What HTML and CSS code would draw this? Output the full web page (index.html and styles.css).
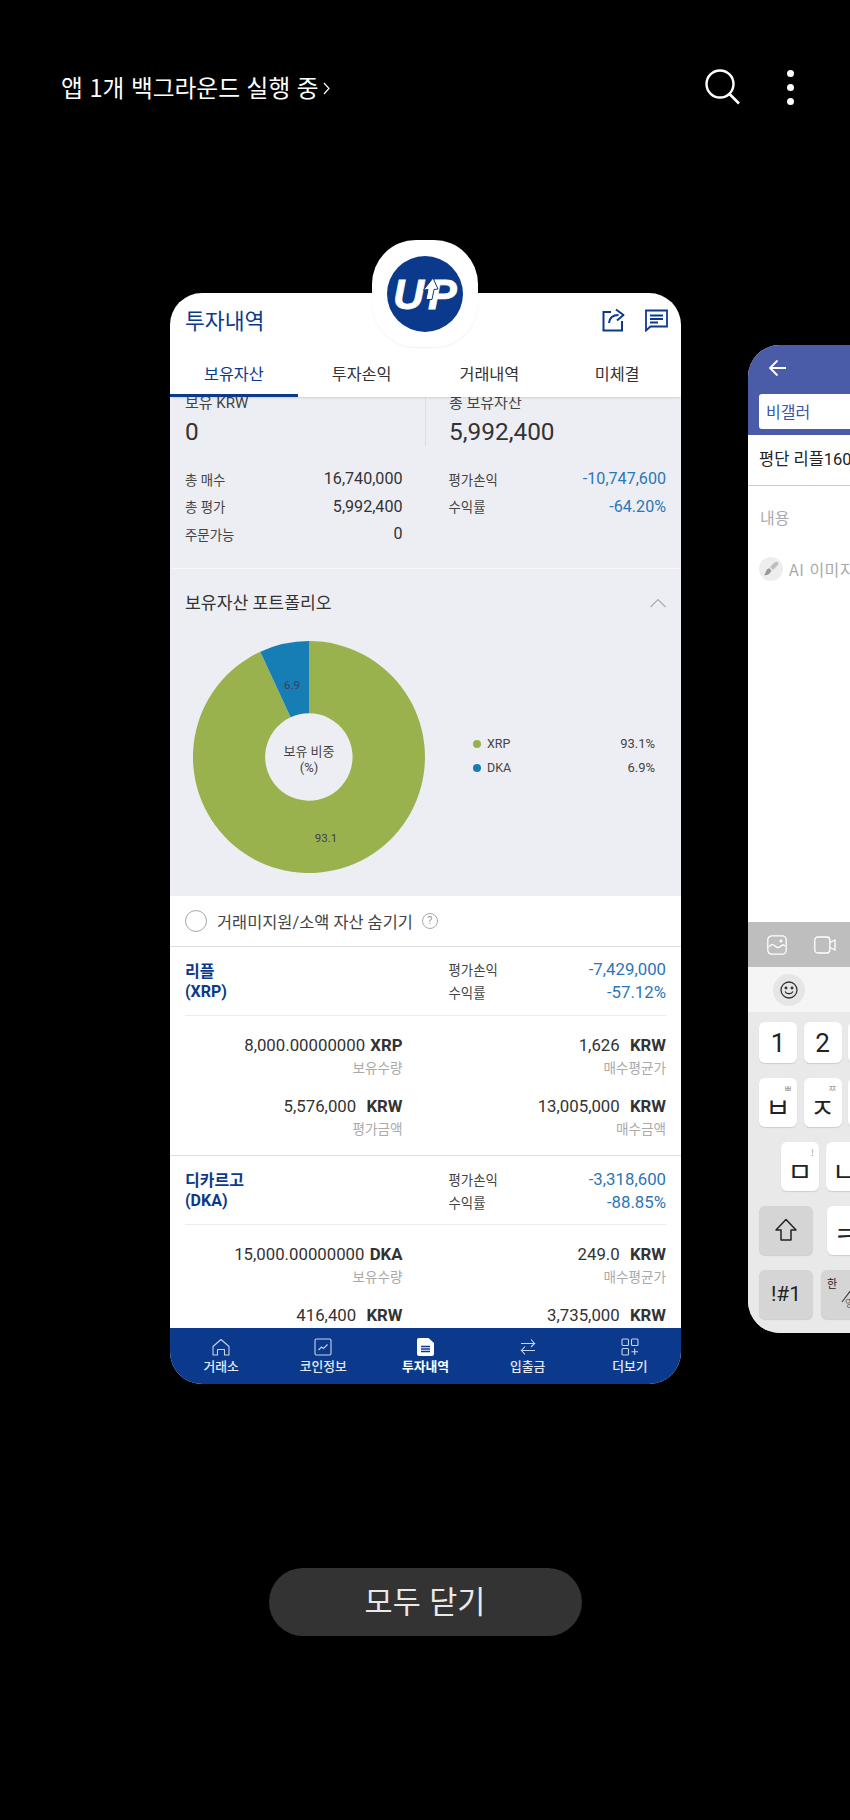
FILE: index.html
```html
<!DOCTYPE html>
<html lang="ko">
<head>
    <meta charset="UTF-8">
    <meta name="viewport" content="width=device-width, initial-scale=1.0">
    <title>최근 앱</title>
    <link rel="stylesheet" href="styles.css">
</head>
<body>
<div class="screen">

    <div class="topbar">
        <div class="running">앱 1개 백그라운드 실행 중
            <svg class="running-arrow" width="7" height="13" viewBox="0 0 7 13"><path d="M1 1l5 5.500-5 5.500" fill="none" stroke="#fff" stroke-width="1.200"/></svg>
        </div>
        <div class="top-actions">
            <svg width="38" height="40" viewBox="0 0 38 40"><circle cx="17" cy="17" r="13.500" fill="none" stroke="#fff" stroke-width="2.400"/><path d="M26.500 27l9.500 9.500" stroke="#fff" stroke-width="2.600" fill="none"/></svg>
            <div class="dots"><span></span><span></span><span></span></div>
        </div>
    </div>

    <div class="stage">
        <!-- recent app: exchange -->
        <div class="card">
            <div class="app-head">
                <h1 class="app-title">투자내역</h1>
                <div class="head-icons">
                    <svg width="24" height="24" viewBox="0 0 24 24" fill="none" stroke="#0b3a8d" stroke-width="2"><path d="M9 4H1.500v18.500h18.500V13"/><path d="M7 15c.5-4.500 3.500-8 9.500-8M14 1.500l7.500 5.500-6.500 5.500" stroke-linejoin="round"/></svg>
                    <svg width="23" height="24" viewBox="0 0 23 24" fill="none" stroke="#0b3a8d" stroke-width="1.800"><path d="M1 2.500h21v16H5.500L1 22.500z"/><path d="M5 7.500h13M5 11h13M5 14.500h8"/></svg>
                </div>
            </div>
            <div class="tabs">
                <div class="tab active">보유자산</div>
                <div class="tab">투자손익</div>
                <div class="tab">거래내역</div>
                <div class="tab">미체결</div>
            </div>

            <div class="scroll">
                <div class="summary">
                    <div class="totals">
                        <div class="total-col">
                            <div class="total-label">보유 KRW</div>
                            <div class="total-value">0</div>
                        </div>
                        <div class="total-col">
                            <div class="total-label">총 보유자산</div>
                            <div class="total-value">5,992,400</div>
                        </div>
                    </div>
                    <div class="stats">
                        <div class="stat-col">
                            <div class="stat"><span>총 매수</span><b>16,740,000</b></div>
                            <div class="stat"><span>총 평가</span><b>5,992,400</b></div>
                            <div class="stat"><span>주문가능</span><b>0</b></div>
                        </div>
                        <div class="stat-col">
                            <div class="stat"><span>평가손익</span><b class="minus">-10,747,600</b></div>
                            <div class="stat"><span>수익률</span><b class="minus">-64.20%</b></div>
                        </div>
                    </div>
                </div>

                <div class="portfolio">
                    <div class="portfolio-head">
                        <h2>보유자산 포트폴리오</h2>
                        <svg width="16" height="10" viewBox="0 0 16 10"><path d="M.5 9L8 1.500 15.500 9" fill="none" stroke="#a9abb2" stroke-width="1.100"/></svg>
                    </div>
                    <div class="portfolio-body">
                        <svg class="donut" width="232" height="232" viewBox="0 0 232 232">
                            <path d="M116 0A116 116 0 1 1 67.300 10.700L97.600 76.300A43.700 43.700 0 1 0 116 72.300Z" fill="#9ab24d"/>
                            <path d="M116 0A116 116 0 0 0 67.300 10.700L97.600 76.300A43.700 43.700 0 0 1 116 72.300Z" fill="#167db5"/>
                            <text x="99" y="45" class="slice-label">6.9</text>
                            <text x="133" y="198" class="slice-label">93.1</text>
                            <text x="116" y="115" class="hole-label">보유 비중</text>
                            <text x="116" y="131" class="hole-label">(%)</text>
                        </svg>
                        <div class="legend">
                            <div class="legend-row"><i class="dot-xrp"></i><span>XRP</span><b>93.1%</b></div>
                            <div class="legend-row"><i class="dot-dka"></i><span>DKA</span><b>6.9%</b></div>
                        </div>
                    </div>
                </div>

                <div class="hide-row">
                    <span class="radio"></span>
                    <span>거래미지원/소액 자산 숨기기</span>
                    <span class="help">?</span>
                </div>

                <div class="coin">
                    <div class="coin-head">
                        <div class="coin-name">리플<br>(XRP)</div>
                        <div class="coin-pl">
                            <div class="pl"><span>평가손익</span><b>-7,429,000</b></div>
                            <div class="pl"><span>수익률</span><b>-57.12%</b></div>
                        </div>
                    </div>
                    <div class="details">
                        <div class="cell"><div class="amount">8,000.00000000 <b class="unit-coin">XRP</b></div><div class="cell-label">보유수량</div></div>
                        <div class="cell"><div class="amount">1,626 <b>KRW</b></div><div class="cell-label">매수평균가</div></div>
                        <div class="cell"><div class="amount">5,576,000 <b>KRW</b></div><div class="cell-label">평가금액</div></div>
                        <div class="cell"><div class="amount">13,005,000 <b>KRW</b></div><div class="cell-label">매수금액</div></div>
                    </div>
                </div>

                <div class="coin">
                    <div class="coin-head">
                        <div class="coin-name">디카르고<br>(DKA)</div>
                        <div class="coin-pl">
                            <div class="pl"><span>평가손익</span><b>-3,318,600</b></div>
                            <div class="pl"><span>수익률</span><b>-88.85%</b></div>
                        </div>
                    </div>
                    <div class="details">
                        <div class="cell"><div class="amount">15,000.00000000 <b class="unit-coin">DKA</b></div><div class="cell-label">보유수량</div></div>
                        <div class="cell"><div class="amount">249.0 <b>KRW</b></div><div class="cell-label">매수평균가</div></div>
                        <div class="cell"><div class="amount">416,400 <b>KRW</b></div><div class="cell-label">평가금액</div></div>
                        <div class="cell"><div class="amount">3,735,000 <b>KRW</b></div><div class="cell-label">매수금액</div></div>
                    </div>
                </div>
            </div>

            <div class="bottom-nav">
                <div class="nav-item">
                    <svg width="18" height="18" viewBox="0 0 18 18" fill="none" stroke="#c9d3ea" stroke-width="1.100"><path d="M1 8.500L9 1.500l8 7v8.500h-4.500v-5.500h-7V17H1z" stroke-linejoin="round"/></svg>
                    <span>거래소</span>
                </div>
                <div class="nav-item">
                    <svg width="18" height="18" viewBox="0 0 18 18" fill="none" stroke="#c9d3ea" stroke-width="1.100"><rect x="1" y="1" width="16" height="16" rx="1.500"/><path d="M4.500 12l3-3 2 1.500 4-4"/></svg>
                    <span>코인정보</span>
                </div>
                <div class="nav-item current">
                    <svg width="18" height="18" viewBox="0 0 18 18"><path d="M2 0h9.500L17 5v11a2 2 0 0 1-2 2H2a2 2 0 0 1-2-2V2a2 2 0 0 1 2-2z" fill="#fff"/><path d="M4 8.500h9M4 11h9M4 13.500h9" stroke="#0b3a8d" stroke-width="1.300"/></svg>
                    <span>투자내역</span>
                </div>
                <div class="nav-item">
                    <svg width="18" height="18" viewBox="0 0 18 18" fill="none" stroke="#c9d3ea" stroke-width="1.100"><path d="M2 5.500h13.500L12 1.500M15.500 5.500L12 9M16 12.500H2.500L6 8.500M2.500 12.500L6 16.500"/></svg>
                    <span>입출금</span>
                </div>
                <div class="nav-item">
                    <svg width="18" height="18" viewBox="0 0 18 18" fill="none" stroke="#c9d3ea" stroke-width="1.100"><rect x="1" y="1" width="6.500" height="6.500" rx="1"/><rect x="10.500" y="1" width="6.500" height="6.500" rx="1"/><rect x="1" y="10.500" width="6.500" height="6.500" rx="1"/><path d="M13.700 10.500v6.500M10.500 13.700H17"/></svg>
                    <span>더보기</span>
                </div>
            </div>
        </div>

        <div class="app-icon">
            <svg width="76" height="76" viewBox="0 0 76 76">
                <circle cx="38" cy="38" r="38" fill="#0b3a8d"/>
                <text x="6" y="53" class="logo-text">U</text>
                <text x="41" y="53" class="logo-text">P</text>
                <path d="M46 22l5 11-4 .5-2 10h-6l2-10-4.500.5z" fill="#fff" stroke="#0b3a8d" stroke-width="1"/>
            </svg>
        </div>

        <!-- recent app: community post, runs off the screen -->
        <div class="card-post">
            <div class="post-head">
                <svg class="post-back" width="20" height="18" viewBox="0 0 20 18" fill="none" stroke="#fff" stroke-width="1.800"><path d="M18 9H2M9.500 1.500L2 9l7.500 7.500"/></svg>
                <div class="post-gallery">비갤러</div>
            </div>
            <div class="post-title">평단 리플160</div>
            <div class="post-body">
                <div class="post-hint">내용</div>
                <div class="post-ai">
                    <span class="ai-badge">
                        <svg width="16" height="16" viewBox="0 0 16 16"><path d="M15 1.500c-1-1-2.500-.8-4 .5L7 6l3 3 4-4c1.300-1.500 2-2.500 1-3.500z" fill="#bdbdbd"/><path d="M6 7l-2 1.500C2.500 10 3.500 11.500 1 14c3 .5 5-.5 6-2l1.500-2.500z" fill="#9a9a9a"/></svg>
                    </span>
                    <span>AI 이미지</span>
                </div>
            </div>
            <div class="post-tools">
                <svg width="20" height="20" viewBox="0 0 20 20" fill="none" stroke="#fff" stroke-width="1.300"><rect x=".8" y=".8" width="18.400" height="18.400" rx="4"/><path d="M2 12c2-3 4-3 6-1s4 2 6 0 3-1 4 0"/><circle cx="14" cy="6" r=".8" fill="#fff"/></svg>
                <svg width="22" height="18" viewBox="0 0 22 18" fill="none" stroke="#fff" stroke-width="1.300"><rect x=".8" y="1" width="15" height="16" rx="3"/><path d="M16 6.500l5-2.500v10l-5-2.500"/></svg>
            </div>
            <div class="post-emoji">
                <span class="emoji-btn">
                    <svg width="18" height="18" viewBox="0 0 18 18" fill="none" stroke="#333" stroke-width="1.300"><circle cx="9" cy="9" r="8"/><path d="M5 10.500c1.500 3 6.500 3 8 0"/><circle cx="6" cy="7" r=".8" fill="#333"/><circle cx="12" cy="7" r=".8" fill="#333"/></svg>
                </span>
            </div>
            <div class="keyboard">
                <div class="key-row">
                    <div class="key num">1</div>
                    <div class="key num">2</div>
                    <div class="key num">3</div>
                </div>
                <div class="key-row tall">
                    <div class="key"><small>ㅃ</small>ㅂ</div>
                    <div class="key"><small>ㅉ</small>ㅈ</div>
                    <div class="key"><small>ㄸ</small>ㄷ</div>
                </div>
                <div class="key-row tall shifted">
                    <div class="key"><small>!</small>ㅁ</div>
                    <div class="key">ㄴ</div>
                </div>
                <div class="key-row tall">
                    <div class="key fn">
                        <svg width="22" height="24" viewBox="0 0 22 24" fill="none" stroke="#222" stroke-width="1.500"><path d="M11 1.500L21 12h-5v10H6V12H1z" stroke-linejoin="round"/></svg>
                    </div>
                    <div class="key after-fn">ㅋ</div>
                </div>
                <div class="key-row tall">
                    <div class="key fn sym">!#1</div>
                    <div class="key lang fn"><em>한</em><svg width="16" height="18" viewBox="0 0 16 18"><path d="M14 1L2 17" stroke="#333" stroke-width="1.100"/></svg><em class="eng">영</em></div>
                </div>
            </div>
        </div>
    </div>

    <div class="close-all">모두 닫기</div>
</div>
</body>
</html>
```

FILE: styles.css
```css
html, body {
    margin: 0;
    padding: 0;
    background-color: #000;
    font-family: Roboto, "Noto Sans CJK KR", sans-serif;
}
h1, h2 {
    margin: 0;
    font-weight: 400;
}
.screen {
    width: 850px;
    height: 1820px;
    overflow: hidden;
    display: flex;
    flex-direction: column;
    align-items: center;
}

/* top bar */
.topbar {
    width: 100%;
    box-sizing: border-box;
    height: 174px;
    flex: none;
    padding: 0 56px 0 61px;
    display: flex;
    justify-content: space-between;
    align-items: center;
}
.running {
    font-family: "Noto Sans CJK KR", sans-serif;
    font-size: 23.700px;
    color: #fff;
    display: flex;
    align-items: center;
    gap: 4px;
}
.running-arrow {
    margin-top: 3px;
}
.top-actions {
    display: flex;
    align-items: center;
    gap: 46px;
}
.dots {
    display: flex;
    flex-direction: column;
    gap: 7px;
}
.dots span {
    width: 7px;
    height: 7px;
    border-radius: 50%;
    background-color: #fff;
}

/* cards sit on the recents stage */
.stage {
    position: relative;
    width: 100%;
    height: 1394px;
    flex: none;
}
.card {
    position: absolute;
    left: 170px;
    top: 119px;
    width: 511px;
    height: 1091px;
    border-radius: 32px;
    overflow: hidden;
    background-color: #fff;
    display: flex;
    flex-direction: column;
}
.app-icon {
    position: absolute;
    left: 372px;
    top: 66px;
    width: 106px;
    height: 107px;
    border-radius: 44px;
    background-color: #fff;
    display: flex;
    justify-content: center;
    align-items: center;
    box-shadow: 0 1px 2px rgba(0, 0, 0, 0.06);
}
.logo-text {
    font-family: "Liberation Sans", sans-serif;
    font-weight: bold;
    font-style: italic;
    font-size: 43px;
    fill: #fff;
    stroke: #fff;
    stroke-width: 0.8px;
}

.app-head {
    height: 60px;
    flex: none;
    padding: 0 13px 7px 15px;
    display: flex;
    justify-content: space-between;
    align-items: center;
    box-sizing: border-box;
}
.app-title {
    font-family: "Noto Sans CJK KR", sans-serif;
    font-size: 21.600px;
    color: #0b3a8d;
    line-height: 28px;
}
.head-icons {
    display: flex;
    gap: 19px;
    align-items: center;
}
.tabs {
    height: 44px;
    flex: none;
    display: flex;
    position: relative;
    z-index: 2;
    background-color: #fff;
    box-shadow: 0 2px 2px -1px rgba(0, 0, 0, 0.12);
}
.tab {
    flex: 1;
    box-sizing: border-box;
    text-align: center;
    line-height: 40px;
    font-size: 16.300px;
    color: #333;
    font-family: "Noto Sans CJK KR", sans-serif;
}
.tab.active {
    color: #0b3a8d;
    border-bottom: 3px solid #0b3a8d;
}

.scroll {
    flex: 1;
    overflow: hidden;
    min-height: 0;
}

/* summary */
.summary {
    background-color: #edeef3;
    padding-bottom: 20px;
    border-bottom: 1px solid #f8f8fb;
    margin-top: -4px;
}
.totals {
    display: flex;
}
.total-col {
    flex: 0 0 255px;
    box-sizing: border-box;
    padding-left: 15px;
    height: 53px;
}
.total-col + .total-col {
    flex: 1;
    border-left: 1px solid #dcdde2;
    padding-left: 23px;
}
.total-label {
    font-size: 15px;
    line-height: 20px;
    color: #444;
}
.total-value {
    margin-top: 4px;
    font-size: 24.400px;
    line-height: 30px;
    color: #333;
}
.stats {
    display: grid;
    grid-template-columns: 1fr 1fr;
    column-gap: 46px;
    padding: 19px 15px 0;
}
.stat {
    display: flex;
    justify-content: space-between;
    align-items: center;
    height: 27.500px;
    font-size: 13.400px;
    color: #444;
}
.stat b {
    font-weight: 400;
    font-size: 16.100px;
    color: #333;
}
.stat b.minus {
    color: #2b76b9;
}

/* portfolio */
.portfolio {
    background-color: #edeef3;
    height: 327px;
}
.portfolio-head {
    height: 72px;
    box-sizing: border-box;
    padding: 22px 15px 0;
    display: flex;
    justify-content: space-between;
    align-items: flex-start;
}
.portfolio-head h2 {
    font-size: 17.200px;
    line-height: 24px;
    color: #333;
}
.portfolio-head svg {
    margin-top: 7px;
}
.portfolio-body {
    display: flex;
    align-items: center;
    padding-left: 23px;
}
.donut {
    flex: none;
}
.slice-label {
    font-size: 11.500px;
    fill: #3c3f55;
    text-anchor: middle;
    dominant-baseline: middle;
}
.hole-label {
    font-size: 13px;
    fill: #444;
    text-anchor: middle;
}
.legend {
    margin-left: 48px;
    width: 182px;
    margin-top: -2px;
    display: flex;
    flex-direction: column;
    gap: 4px;
}
.legend-row {
    display: flex;
    align-items: center;
    height: 20px;
    font-size: 12.500px;
    color: #444;
}
.legend-row i {
    width: 8px;
    height: 8px;
    border-radius: 50%;
    margin-right: 6px;
}
.dot-xrp {
    background-color: #9ab24d;
}
.dot-dka {
    background-color: #167db5;
}
.legend-row b {
    margin-left: auto;
    font-weight: 400;
    font-size: 13px;
}

/* hide small balances */
.hide-row {
    height: 50px;
    box-sizing: content-box;
    border-bottom: 1px solid #dedede;
    padding-left: 15px;
    display: flex;
    align-items: center;
    gap: 9px;
    font-size: 16.400px;
    color: #444;
    background-color: #fff;
}
.radio {
    width: 20px;
    height: 20px;
    margin-right: 1px;
    border: 1.500px solid #a8a8a8;
    border-radius: 50%;
}
.help {
    width: 14px;
    height: 14px;
    border: 1px solid #aaa;
    border-radius: 50%;
    font-size: 11px;
    line-height: 14px;
    text-align: center;
    color: #999;
}

/* coin blocks */
.coin {
    border-bottom: 1px solid #dedede;
    height: 208.500px;
}
.coin-head {
    margin: 0 15px;
    height: 68px;
    border-bottom: 1px solid #ececec;
    display: grid;
    grid-template-columns: 1fr 1fr;
    column-gap: 46px;
    align-items: center;
}
.coin-name {
    padding-top: 2px;
    font-weight: 700;
    font-size: 16px;
    line-height: 20px;
    color: #0b3a8d;
}
.pl {
    display: flex;
    justify-content: space-between;
    align-items: center;
    height: 23px;
    font-size: 13.400px;
    color: #444;
}
.pl b {
    font-weight: 400;
    font-size: 16.800px;
    color: #2b76b9;
}
.details {
    display: grid;
    grid-template-columns: 1fr 1fr;
    column-gap: 46px;
    row-gap: 16px;
    padding: 17px 15px 0;
}
.cell {
    text-align: right;
}
.amount {
    font-size: 16.800px;
    line-height: 24px;
    color: #333;
    white-space: nowrap;
}
.amount b {
    font-weight: 700;
    margin-left: 6px;
}
.amount b.unit-coin {
    margin-left: 1px;
}
.cell-label {
    margin-top: 1px;
    font-size: 13.600px;
    line-height: 20px;
    color: #aaa;
}

.bottom-nav {
    height: 56px;
    flex: none;
    background-color: #0b3a8d;
    display: flex;
    position: relative;
    z-index: 2;
}
.nav-item {
    flex: 1;
    display: flex;
    flex-direction: column;
    align-items: center;
    padding-top: 10px;
    font-size: 12.800px;
    font-weight: 500;
    line-height: 18px;
    color: #e4e9f5;
}
.nav-item span {
    margin-top: 2px;
}
.nav-item.current {
    color: #fff;
    font-weight: 700;
}

/* second app */
.card-post {
    position: absolute;
    left: 748px;
    top: 171px;
    width: 511px;
    height: 988px;
    border-radius: 32px;
    overflow: hidden;
    background-color: #fff;
    display: flex;
    flex-direction: column;
    font-family: "Noto Sans CJK KR", sans-serif;
}
.post-head {
    height: 90px;
    flex: none;
    box-sizing: border-box;
    background-color: #4a5ba8;
    padding: 14px 0 0 11px;
    display: flex;
    flex-direction: column;
}
.post-back {
    margin-left: 9px;
    margin-bottom: 17px;
}
.post-gallery {
    height: 35px;
    line-height: 35px;
    background-color: #fff;
    border-radius: 3px;
    padding-left: 7px;
    font-size: 16px;
    color: #3a55a8;
}
.post-title {
    height: 51px;
    flex: none;
    box-sizing: border-box;
    border-bottom: 1px solid #c3cfe8;
    padding-left: 11px;
    line-height: 50px;
    font-size: 16.500px;
    color: #222;
    font-family: Roboto, "Noto Sans CJK KR", sans-serif;
}
.post-body {
    flex: 1;
    padding: 18px 0 0 12px;
    color: #aaa;
    font-size: 16px;
}
.post-hint {
    line-height: 26px;
}
.post-ai {
    margin: 27px 0 0 -1px;
    display: flex;
    align-items: center;
    gap: 6px;
    height: 24px;
    letter-spacing: 0.5px;
}
.ai-badge {
    width: 24px;
    height: 24px;
    border-radius: 50%;
    background-color: #eee;
    display: flex;
    justify-content: center;
    align-items: center;
}
.post-tools {
    height: 45px;
    flex: none;
    background-color: #bebebe;
    display: flex;
    align-items: center;
    padding-left: 19px;
    gap: 27px;
}
.post-emoji {
    height: 45px;
    flex: none;
    background-color: #f5f5f5;
    display: flex;
    align-items: center;
    padding-left: 25px;
}
.emoji-btn {
    width: 32px;
    height: 32px;
    border-radius: 50%;
    background-color: #e6e6e6;
    display: flex;
    justify-content: center;
    align-items: center;
}
.keyboard {
    height: 321px;
    flex: none;
    box-sizing: border-box;
    background-color: #e9e9e9;
    padding: 10px 0 0 11px;
    display: flex;
    flex-direction: column;
    gap: 14.500px;
}
.key-row {
    display: flex;
    gap: 6.500px;
    height: 41px;
}
.key-row.tall {
    height: 49.500px;
}
.key-row.shifted {
    padding-left: 22px;
}
.key {
    position: relative;
    width: 38px;
    border-radius: 6px;
    background-color: #fff;
    box-shadow: 0 1px 1px rgba(0, 0, 0, 0.12);
    color: #222;
    font-size: 27px;
    display: flex;
    justify-content: center;
    align-items: center;
    padding-top: 8px;
    box-sizing: border-box;
}
.key.num {
    font-family: Roboto, sans-serif;
    font-size: 26px;
    font-weight: 400;
    padding-top: 0;
}
.key small {
    position: absolute;
    top: 6px;
    right: 5px;
    font-size: 9px;
    line-height: 10px;
    color: #999;
}
.key.fn {
    width: 54px;
    background-color: #d5d5d5;
    padding-top: 0;
}
.key.after-fn {
    margin-left: 7.500px;
}
.key.sym {
    font-family: Roboto, sans-serif;
    font-size: 21px;
    font-weight: 400;
}
.key.lang {
    margin-left: 1.500px;
}
.key.lang em {
    position: absolute;
    left: 6px;
    top: 6px;
    font-style: normal;
    font-size: 11px;
    line-height: 14px;
}
.key.lang em.eng {
    left: 24px;
    top: 26px;
    color: #666;
    font-size: 10px;
}

.close-all {
    width: 313px;
    height: 68px;
    flex: none;
    border-radius: 34px;
    background-color: #333;
    color: #e9e9e9;
    text-align: center;
    line-height: 64px;
    font-size: 30.500px;
    font-family: "Noto Sans CJK KR", sans-serif;
}
```
